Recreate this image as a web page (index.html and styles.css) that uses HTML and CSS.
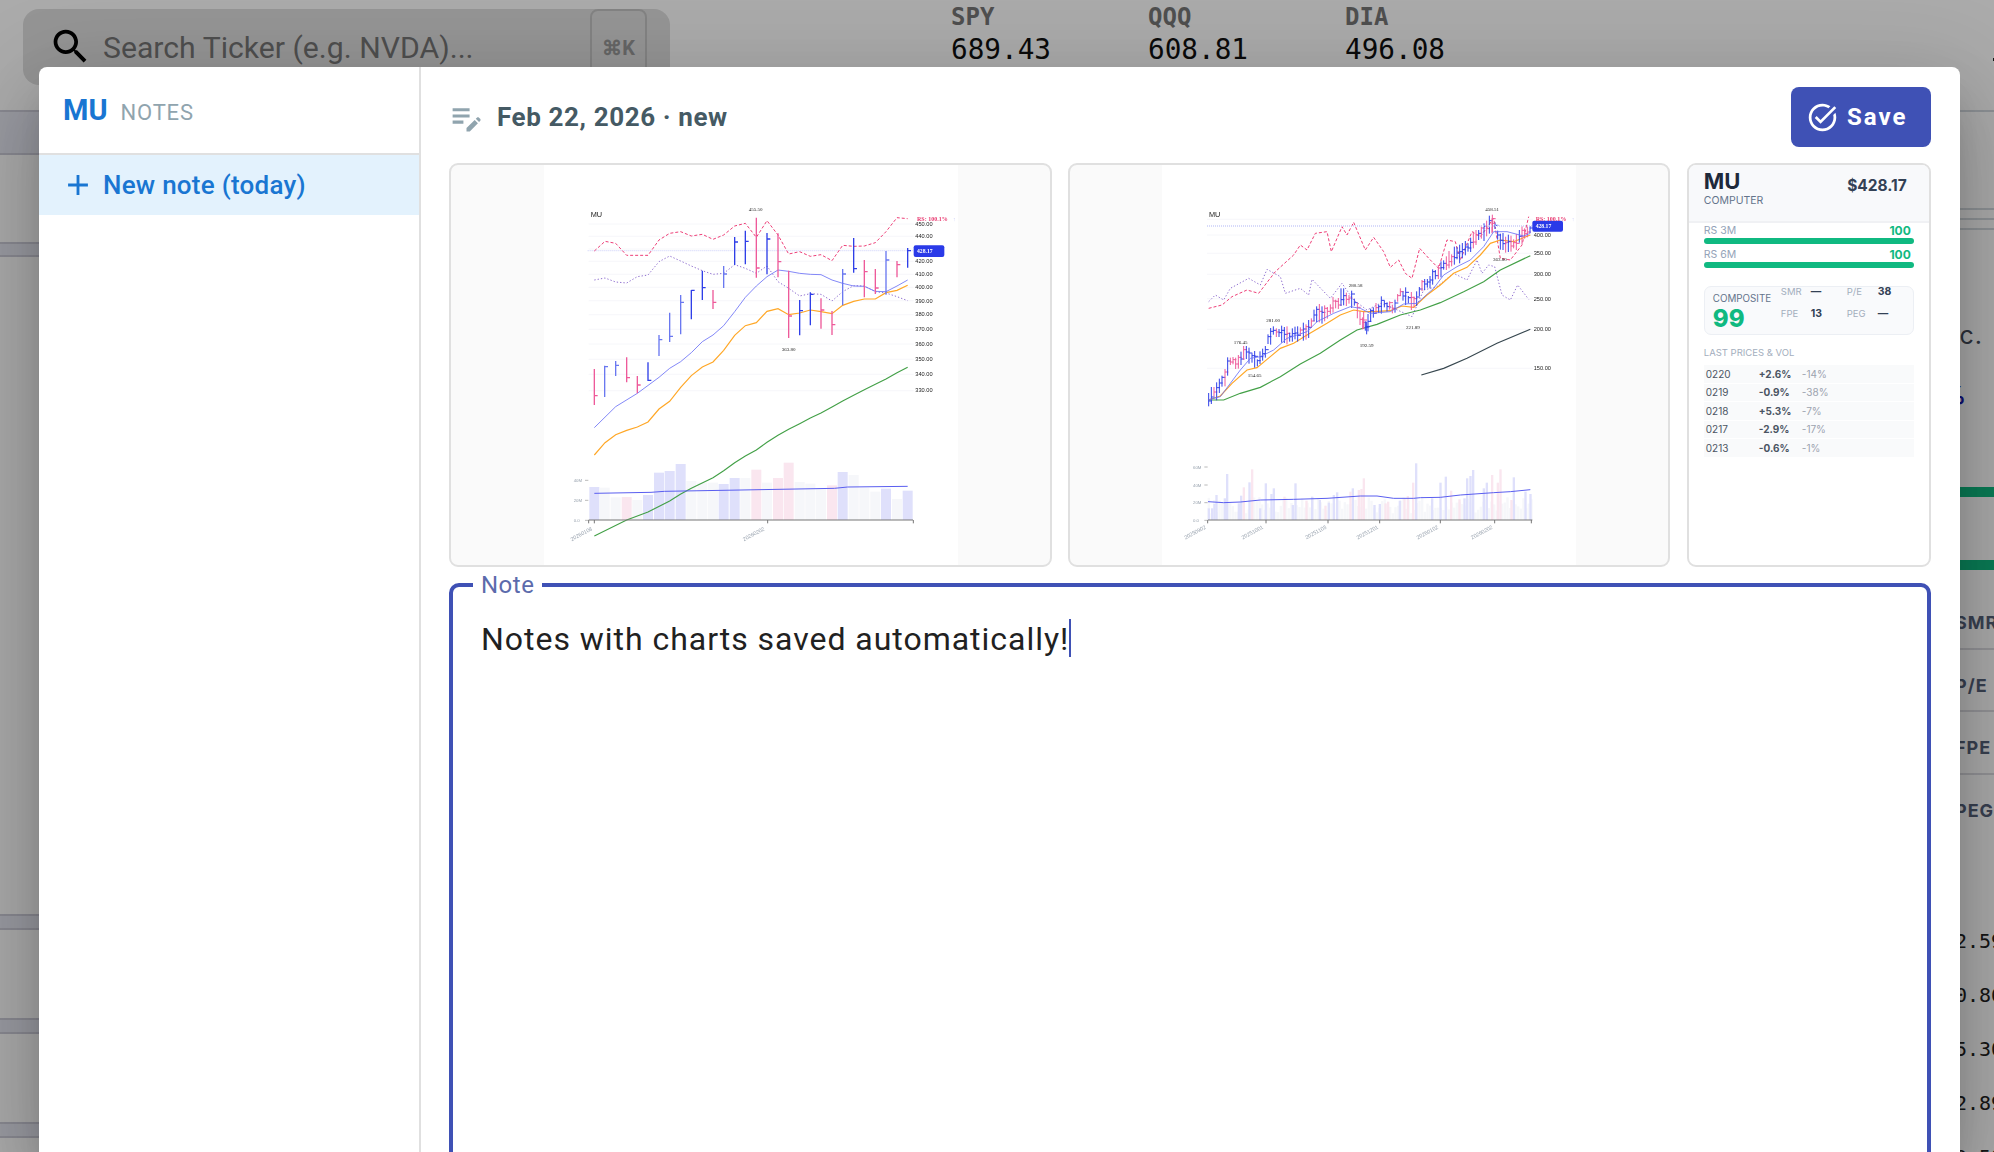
FILE: index.html
```html
<!DOCTYPE html>
<html lang="en">
<head>
    <meta charset="UTF-8">
    <title>MU Notes</title>
    <link rel="stylesheet" href="styles.css">
</head>
<body>

    <!-- Page behind the dialog -->
    <div class="page">
        <div class="topbar">
            <div class="search">
                <svg class="search-icon" viewBox="0 0 24 24"><path d="M15.5 14h-.79l-.28-.27C15.41 12.59 16 11.11 16 9.5 16 5.91 13.09 3 9.5 3S3 5.91 3 9.5 5.91 16 9.5 16c1.61 0 3.09-.59 4.23-1.57l.27.28v.79l5 4.99L20.49 19l-4.99-5zm-6 0C7.01 14 5 11.99 5 9.5S7.01 5 9.5 5 14 7.01 14 9.5 11.99 14 9.5 14z"/></svg>
                <span class="search-text">Search Ticker (e.g. NVDA)...</span>
                <span class="search-key">⌘K</span>
            </div>
            <div class="tickers">
                <div class="ticker"><div class="ticker-name">SPY</div><div class="ticker-value">689.43</div></div>
                <div class="ticker"><div class="ticker-name">QQQ</div><div class="ticker-value">608.81</div></div>
                <div class="ticker"><div class="ticker-name">DIA</div><div class="ticker-value">496.08</div></div>
            </div>
            <div class="topbar-mark"></div>
        </div>
        <div class="content">
            <div class="left-col">
                <div class="band band-head"></div>
                <div class="band band-thin"></div>
                <div class="band band-row band-first"></div>
                <div class="band band-row"></div>
                <div class="band band-row"></div>
            </div>
            <div class="right-col">
                <div class="stock-lines"></div>
                <div class="stock-name"><span>Micron Technology, Inc.</span></div>
                <div class="stock-change">+2.6%</div>
                <div class="meter meter-first"></div>
                <div class="meter"></div>
                <div class="stat stat-first">SMR</div>
                <div class="stat">P/E</div>
                <div class="stat">FPE</div>
                <div class="stat stat-last">PEG</div>
                <div class="price price-first">2.59</div>
                <div class="price">0.86</div>
                <div class="price">5.30</div>
                <div class="price">2.89</div>
                <div class="price">0.59</div>
            </div>
        </div>
    </div>
    <div class="backdrop"></div>

    <!-- Notes dialog -->
    <div class="dialog">
        <aside class="sidebar">
            <div class="sidebar-head">
                <span class="sidebar-symbol">MU</span>
                <span class="sidebar-label">NOTES</span>
            </div>
            <div class="note-item">
                <svg class="plus-icon" viewBox="0 0 24 24"><path d="M19 13h-6v6h-2v-6H5v-2h6V5h2v6h6v2z"/></svg>
                <span>New note (today)</span>
            </div>
        </aside>

        <main class="main">
            <div class="main-head">
                <div class="main-title">
                    <svg class="edit-icon" viewBox="0 0 24 24"><path d="M3 10h11v2H3v-2zm0-2h11V6H3v2zm0 8h7v-2H3v2zm15.01-3.13.71-.71c.39-.39 1.02-.39 1.41 0l.71.71c.39.39.39 1.02 0 1.41l-.71.71-2.12-2.12zm-.71.71-5.3 5.3V21h2.12l5.3-5.3-2.12-2.12z"/></svg>
                    <span>Feb 22, 2026 · new</span>
                </div>
                <button class="save-btn">
                    <svg class="save-icon" viewBox="0 0 24 24"><path d="M22 5.18 10.59 16.6l-4.24-4.24 1.41-1.41 2.83 2.83 10-10L22 5.18zm-2.21 5.04c.13.57.21 1.17.21 1.78 0 4.42-3.58 8-8 8s-8-3.58-8-8 3.58-8 8-8c1.58 0 3.04.46 4.28 1.25l1.44-1.44C16.1 2.67 14.13 2 12 2 6.48 2 2 6.48 2 12s4.48 10 10 10 10-4.48 10-10c0-1.19-.22-2.33-.6-3.39l-1.61 1.61z"/></svg>
                    Save
                </button>
            </div>

            <div class="thumbs">
                <div class="thumb"><svg id="chartDaily" class="chart"></svg></div>
                <div class="thumb"><svg id="chartLong" class="chart"></svg></div>
                <div class="thumb card">
                    <div class="card-head">
                        <div>
                            <div class="card-symbol">MU</div>
                            <div class="card-group">COMPUTER</div>
                        </div>
                        <div class="card-price">$428.17</div>
                    </div>
                    <div class="card-body">
                        <div class="rs-row"><span>RS 3M</span><b>100</b></div>
                        <div class="rs-bar"></div>
                        <div class="rs-row"><span>RS 6M</span><b>100</b></div>
                        <div class="rs-bar"></div>
                        <div class="composite">
                            <div class="composite-score">
                                <div class="composite-label">COMPOSITE</div>
                                <div class="composite-value">99</div>
                            </div>
                            <div class="composite-grid">
                                <span>SMR</span><b>—</b><span>P/E</span><b>38</b>
                                <span>FPE</span><b>13</b><span>PEG</span><b>—</b>
                            </div>
                        </div>
                        <div class="last-title">LAST PRICES &amp; VOL</div>
                        <div class="last-row"><span>0220</span><b>+2.6%</b><i>-14%</i></div>
                        <div class="last-row"><span>0219</span><b>-0.9%</b><i>-38%</i></div>
                        <div class="last-row"><span>0218</span><b>+5.3%</b><i>-7%</i></div>
                        <div class="last-row"><span>0217</span><b>-2.9%</b><i>-17%</i></div>
                        <div class="last-row"><span>0213</span><b>-0.6%</b><i>-1%</i></div>
                    </div>
                </div>
            </div>

            <fieldset class="note-box">
                <legend>Note</legend>
                <div class="note-text">Notes with charts saved automatically!<span class="caret"></span></div>
            </fieldset>
        </main>
    </div>

    <script src="charts.js"></script>
</body>
</html>
```

FILE: styles.css
```css
* {
    box-sizing: border-box;
}
html, body {
    margin: 0;
    height: 100%;
    overflow: hidden;
}
body {
    position: relative;
    width: 1994px;
    height: 1152px;
    background: #fff;
    font-family: Roboto, sans-serif;
}

/* page behind the dialog */
.page {
    height: 100%;
    overflow: hidden;
}
.topbar {
    display: flex;
    height: 110px;
    padding: 9px 0 0 23px;
}
.search {
    display: flex;
    align-items: flex-start;
    width: 647px;
    height: 76px;
    border-radius: 16px;
    background: #dfdfdf;
}
.search-icon {
    width: 45px;
    height: 45px;
    margin: 15px 0 0 25px;
}
.search-text {
    width: 487px;
    margin: 21px 0 0 10px;
    font-size: 30.2px;
    color: #777;
}
.search-key {
    width: 57px;
    height: 70px;
    border: 2px solid #c4c4c4;
    border-radius: 8px;
    padding-top: 25px;
    text-align: center;
    font-size: 20px;
    font-weight: 700;
    color: #999;
}
.tickers {
    display: flex;
    margin-left: 281px;
    margin-top: -6px;
}
.ticker {
    width: 197px;
}
.ticker-name {
    font-family: "DejaVu Sans Mono", monospace;
    font-weight: 700;
    font-size: 24px;
    color: #777;
}
.ticker-value {
    font-family: "DejaVu Sans Mono", monospace;
    font-size: 27.7px;
    margin-top: 2px;
    color: #111;
}
.topbar-mark {
    width: 1px;
    height: 3px;
    margin: 49px 0 0 auto;
    background: #222;
}
.content {
    display: flex;
    justify-content: space-between;
}
.left-col {
    width: 900px;
}
.band {
    background: #e6e7f2;
    border-top: 2px solid #cdcdd9;
    border-bottom: 2px solid #cdcdd9;
}
.band-head {
    height: 45px;
}
.band-thin {
    height: 15px;
    margin-top: 87px;
}
.band-row {
    height: 16px;
    margin-top: 88px;
}
.band-first {
    margin-top: 657px;
}
.right-col {
    width: 120px;
    padding-left: 84px;
    overflow: hidden;
    white-space: nowrap;
    font-family: Inter, sans-serif;
}
.stock-lines {
    height: 120px;
    margin-left: -84px;
    border-top: 2px solid #d3d9df;
    background:
        linear-gradient(#d3d9df, #d3d9df) 0 96px / 100% 2px no-repeat,
        linear-gradient(#d3d9df, #d3d9df) 0 106px / 100% 2px no-repeat,
        linear-gradient(#d3d9df, #d3d9df) 0 116px / 100% 2px no-repeat;
}
.stock-name {
    display: flex;
    justify-content: flex-end;
    width: 109px;
    margin: 90px 0 0 -84px;
    font-size: 25px;
    line-height: 30px;
    letter-spacing: 1px;
    color: #444b58;
}
.stock-name span {
    flex-shrink: 0;
}
.stock-change {
    width: 92px;
    margin: 31px 0 0 -84px;
    font-size: 24px;
    line-height: 30px;
    font-weight: 700;
    color: #1a1ab0;
    text-align: right;
}
.meter {
    height: 10px;
    margin: 63px 0 0 -84px;
    background: #10b981;
}
.meter-first {
    margin-top: 76px;
}
.stat {
    width: 80px;
    height: 62.5px;
    margin-left: -3px;
    padding-top: 26px;
    font-size: 18px;
    line-height: 20px;
    font-weight: 700;
    letter-spacing: 1px;
    color: #55617a;
    border-bottom: 2px solid #dcdce2;
}
.stat-first {
    margin-top: 17px;
}
.stat-last {
    border-bottom: none;
}
.price {
    height: 54px;
    font-family: "DejaVu Sans Mono", monospace;
    font-size: 20px;
    line-height: 24px;
    margin-left: -3px;
    color: #222;
}
.price-first {
    margin-top: 92px;
}
.backdrop {
    position: absolute;
    inset: 0;
    background: rgba(0, 0, 0, 0.33);
}

/* dialog */
.dialog {
    position: absolute;
    left: 39px;
    top: 67px;
    width: 1921px;
    height: 1085px;
    display: flex;
    background: #fff;
    border-radius: 8px 8px 0 0;
    box-shadow: 0 22px 30px -14px rgba(0, 0, 0, 0.2), 0 48px 76px 6px rgba(0, 0, 0, 0.14), 0 18px 92px 16px rgba(0, 0, 0, 0.12);
}
.sidebar {
    width: 382px;
    flex-shrink: 0;
    border-right: 2px solid #e0e0e0;
}
.sidebar-head {
    display: flex;
    align-items: baseline;
    gap: 13px;
    height: 88px;
    padding: 26px 0 0 24px;
    border-bottom: 2px solid #e0e0e0;
}
.sidebar-symbol {
    font-size: 29px;
    font-weight: 700;
    color: #1976d2;
}
.sidebar-label {
    font-size: 22px;
    letter-spacing: 0.8px;
    color: #90a4ae;
}
.note-item {
    display: flex;
    align-items: center;
    height: 60px;
    padding-left: 22px;
    background: #e3f2fd;
    color: #1976d2;
    font-size: 26px;
    font-weight: 500;
    letter-spacing: 0.25px;
}
.plus-icon {
    width: 34px;
    height: 34px;
    margin-right: 8px;
    fill: #1976d2;
}
.main {
    flex: 1;
    min-width: 0;
    padding: 20px 29px 0 28px;
}
.main-head {
    display: flex;
    justify-content: space-between;
    align-items: center;
    height: 60px;
}
.main-title {
    display: flex;
    align-items: center;
    margin-left: -1px;
    font-size: 26px;
    font-weight: 700;
    letter-spacing: 0.6px;
    color: #455a64;
}
.edit-icon {
    width: 37px;
    height: 37px;
    margin-right: 12px;
    fill: #90a4ae;
}
.save-btn {
    display: flex;
    align-items: center;
    width: 140px;
    height: 60px;
    padding: 0 0 0 15px;
    border: none;
    border-radius: 8px;
    background: #3f51b5;
    color: #fff;
    font-family: Roboto, sans-serif;
    font-size: 24px;
    font-weight: 700;
    letter-spacing: 2px;
}
.save-icon {
    width: 33px;
    height: 33px;
    margin-right: 8px;
    fill: #fff;
}
.thumbs {
    display: grid;
    grid-template-columns: 603px 602px 244px;
    column-gap: 16.4px;
    height: 404px;
    margin-top: 16px;
}
.thumb {
    display: flex;
    justify-content: center;
    border: 2px solid #e0e0e0;
    border-radius: 9px;
    background: #fafafa;
    overflow: hidden;
}
.chart {
    width: 414px;
    height: 400px;
    background: #fff;
    filter: blur(0.25px);
}

/* snapshot card, third thumbnail */
.card {
    display: block;
    background: #fff;
    font-family: Inter, sans-serif;
    color: #94a3b8;
}
.card-head {
    display: flex;
    justify-content: space-between;
    height: 58px;
    padding: 3px 22px 0 15px;
    background: #f8f9fb;
    border-bottom: 2px solid #f0f1f4;
}
.card-symbol {
    font-size: 22px;
    font-weight: 700;
    line-height: 26px;
    color: #1e293b;
}
.card-group {
    font-size: 10.5px;
    line-height: 13px;
    color: #64748b;
}
.card-price {
    margin-top: 8px;
    font-size: 15.5px;
    font-weight: 700;
    color: #334155;
}
.card-body {
    padding: 0 15px;
}
.rs-row {
    display: flex;
    justify-content: space-between;
    height: 15px;
    padding-right: 3px;
    font-size: 10.5px;
    line-height: 15px;
}
.rs-row b {
    font-size: 12px;
    color: #10b981;
}
.rs-bar {
    height: 6px;
    margin-bottom: 3px;
    border-radius: 3px;
    background: #10b981;
}
.composite {
    display: flex;
    height: 49px;
    margin-top: 18px;
    padding: 0 0 0 8px;
    border: 1px solid #eceff4;
    border-radius: 7px;
    background: #f9fafc;
}
.composite-score {
    width: 68px;
    padding-top: 5px;
}
.composite-label {
    font-size: 9.8px;
    line-height: 14px;
    color: #64748b;
}
.composite-value {
    font-size: 24px;
    font-weight: 800;
    line-height: 26px;
    color: #10b981;
}
.composite-grid {
    display: grid;
    grid-template-columns: 30px 36px 31px 20px;
    grid-auto-rows: 22px;
    margin-top: -2px;
    font-size: 9.5px;
    line-height: 13px;
    color: #a3aebd;
}
.composite-grid b {
    font-size: 10.5px;
    color: #334155;
}
.last-title {
    height: 19px;
    margin-top: 11px;
    font-size: 9.5px;
    line-height: 13px;
    color: #a3aebd;
}
.last-row {
    display: flex;
    align-items: center;
    height: 18.5px;
    padding-left: 2px;
    background: #f9fafb;
    border-bottom: 1px solid #fff;
    font-size: 10px;
    color: #4b5563;
}
.last-row span {
    width: 53px;
}
.last-row b {
    width: 43px;
    color: #4b5563;
}
.last-row i {
    font-style: normal;
    color: #9ca3af;
}

/* note field */
.note-box {
    height: 620px;
    margin: 4px 0 0;
    padding: 19px 28px;
    border: 4px solid #3f51b5;
    border-radius: 10px;
    min-width: 0;
}
.note-box legend {
    margin-left: -8px;
    padding: 0 8px;
    font-size: 24px;
    line-height: 28px;
    letter-spacing: 0.5px;
    color: #5c6bac;
}
.note-text {
    font-size: 32px;
    line-height: 42px;
    letter-spacing: 0.97px;
    color: #212121;
}
.caret {
    display: inline-block;
    width: 2px;
    height: 38px;
    vertical-align: -7px;
    background: #3f51b5;
}
```

FILE: charts.js
```js
// Chart thumbnails. Coordinates are in a 3x grid over each 414x400 picture.
const BAR_BLUE = '#2f3fe8';
const BAR_PINK = '#ee5a9a';
const VOL = { b: '#dfe0fb', g: '#f6f7fa', p: '#fae6ef' };

function line(points, color, width, dash) {
    const d = dash ? ` stroke-dasharray="${dash}"` : '';
    return `<polyline points="${points}" fill="none" stroke="${color}" stroke-width="${width}"${d}/>`;
}

function label(x, y, text, size, color, extra) {
    return `<text x="${x}" y="${y}" font-size="${size}" fill="${color}" ${extra || ''}>${text}</text>`;
}

function serif(x, y, text) {
    return label(x, y, text, 15, '#222', 'font-family="Liberation Serif"');
}

function priceBar(x, hi, lo, tick, color, width) {
    return `<path d="M${x} ${hi}V${lo}M${x} ${tick}h10" stroke="${color}" stroke-width="${width}" fill="none"/>`;
}

function dateLabel(xEnd, y, text) {
    return label(xEnd, y, text, 16, '#98a2ae', `text-anchor="end" transform="rotate(-28 ${xEnd} ${y})"`);
}

function priceAxis(chart, x) {
    let out = '';
    chart.grid.forEach(y => {
        out += `<path d="M${chart.gridFrom} ${y}H1118" stroke="#f1f3f8" stroke-width="2"/>`;
    });
    chart.labels.forEach(([y, text]) => {
        out += label(x, y, text, 17, '#222');
    });
    return out;
}

function priceTag(x, y, h, dotY) {
    return `<path d="M140 ${dotY}H1118" stroke="#d5d8fa" stroke-width="4" stroke-dasharray="3 3"/>` +
        `<rect x="${x}" y="${y}" width="92" height="${h}" rx="6" fill="#2a3ae8"/>` +
        label(x + 10, y + h / 2 + 6, '428.17', 17, '#fff', 'font-family="Liberation Serif" font-weight="700"') +
        label(x + 10, 122, 'RS: 100.1%', 18, '#e8386f', 'font-family="Liberation Serif" font-weight="700"') +
        label(x + 118, 122, '↑', 16, '#c8ccf5');
}

function volumeAxis(ticks, labels) {
    let out = '<path d="M143 1020H1116" stroke="#777" stroke-width="3"/>';
    ticks.forEach(x => {
        out += `<path d="M${x} 1020v10" stroke="#777" stroke-width="3"/>`;
    });
    labels.forEach(([y, text]) => {
        out += label(98, y + 5, text, 13, '#98a2ae');
        out += `<path d="M132 ${y}h10" stroke="#999" stroke-width="2"/>`;
    });
    return out;
}

function mount(id, x0, y0, body) {
    const svg = document.getElementById(id);
    svg.setAttribute('viewBox', `${x0} ${y0} 1242 1200`);
    svg.setAttribute('font-family', 'Liberation Sans');
    svg.innerHTML = body;
}

// Daily chart: every bar read off the picture
function drawDaily() {
    const bars = [
        [160,567,675,647,'p'],[191,557,651,560,'l'],[224,543,588,556,'l'],[257,532,607,593,'p'],
        [289,588,640,615,'p'],[321,547,603,601,'b'],[354,465,528,479,'l'],[386,398,486,469,'l'],
        [419,345,463,367,'l'],[451,330,418,331,'b'],[484,272,360,323,'b'],[516,330,387,367,'p'],
        [548,258,324,282,'l'],[581,171,255,186,'b'],[613,152,253,184,'b'],[646,113,293,264,'p'],
        [678,159,283,177,'b'],[711,160,292,245,'p'],[743,272,474,408,'p'],[776,360,466,392,'b'],
        [808,337,436,343,'b'],[840,355,446,390,'p'],[873,393,465,434,'p'],[905,267,376,282,'l'],
        [938,174,278,266,'b'],[970,240,352,275,'p'],[1003,267,342,324,'p'],[1035,213,344,240,'l'],
        [1068,243,292,254,'p'],[1100,204,263,212,'b']
    ];
    const vols = [
        [561,'b'],[563,'g'],[592,'g'],[591,'p'],[600,'g'],[585,'b'],[518,'b'],[513,'b'],[492,'b'],[543,'g'],
        [548,'g'],[548,'g'],[552,'b'],[534,'b'],[534,'g'],[509,'p'],[548,'g'],[534,'p'],[488,'p'],[546,'g'],
        [551,'g'],[567,'g'],[556,'p'],[516,'b'],[525,'g'],[563,'g'],[575,'g'],[566,'b'],[597,'g'],[572,'b']
    ];
    let out = priceAxis({
        gridFrom: 143,
        grid: [132,169,207,244,283,322,362,404,448,492,538,583,632],
        labels: [[138,'450.00'],[175,'440.00'],[250,'420.00'],[289,'410.00'],[328,'400.00'],[368,'390.00'],
            [409,'380.00'],[454,'370.00'],[497,'360.00'],[543,'350.00'],[589,'340.00'],[637,'330.00']]
    }, 1123);

    bars.forEach(([x], i) => {
        const [top, kind] = vols[i];
        out += `<rect x="${x - 15}" y="${top + 360}" width="30" height="${660 - top}" fill="${VOL[kind]}"/>`;
    });

    out += priceTag(1118, 196, 35, 212);
    out += label(149, 110, 'MU', 22, '#222');
    out += serif(623, 92, '455.50') + serif(722, 512, '363.80');

    out += line('160,300 192,294 224,306 257,309 289,290 321,285 354,245 386,228 419,243 451,258 484,272 516,283 548,280 581,254 613,265 646,280 678,258 711,305 743,325 776,348 808,341 840,343 873,363 905,335 938,317 970,318 1003,335 1035,339 1068,350 1100,362', '#8f6fd0', 3, '4 6');
    out += line('160,213 192,184 224,190 257,226 321,226 354,180 386,160 419,155 451,168 484,163 516,178 548,165 581,138 613,130 646,172 678,122 711,165 743,222 776,215 808,229 840,224 873,242 905,196 938,199 970,198 1003,188 1035,155 1068,113 1100,116', '#ee3f78', 3, '9 6');
    out += line('160,1068 257,1020 321,996 386,963 418,943 451,925 516,893 548,872 581,848 613,828 646,810 678,787 711,766 743,748 776,731 808,714 840,699 873,681 905,663 938,646 970,629 1003,613 1035,597 1068,578 1100,562', '#43a047', 3.5);
    out += line('160,825 192,788 224,764 257,751 289,741 321,726 354,687 386,664 419,622 451,587 484,561 516,546 548,511 581,466 613,437 646,428 678,394 711,386 743,404 776,399 808,390 840,395 873,401 905,376 938,364 970,357 1003,357 1035,338 1068,331 1100,316', '#ffa726', 3.5);
    out += line('160,743 224,680 289,640 354,592 386,565 419,545 451,518 484,485 516,465 548,437 581,395 613,352 646,318 678,290 711,270 743,274 776,280 808,283 840,284 873,300 905,310 938,318 970,319 1003,334 1035,335 1068,318 1100,300', '#6a70f5', 2.5);

    bars.forEach(([x, hi, lo, tick, kind]) => {
        const color = kind === 'p' ? BAR_PINK : kind === 'l' ? '#6a78f0' : BAR_BLUE;
        out += priceBar(x, hi, lo, tick, color, 4);
    });

    out += line('160,940 330,937 370,934 600,930 880,925 920,921 1100,919', '#5a5ef0', 3);
    out += volumeAxis([143,160,680,1117], [[901,'40M'],[961,'20M'],[1021,'0.0']]);
    out += dateLabel(155, 1050, '20260108') + dateLabel(672, 1050, '20260202');
    mount('chartDaily', 9, -45, out);
}

// Longer chart: bars follow a traced price path, with seeded noise for the wicks
function drawLong() {
    const path = [[143,665],[160,640],[175,622],[195,590],[205,550],[240,540],[245,515],[270,525],[290,545],[315,520],
        [320,485],[340,455],[370,470],[400,465],[440,450],[465,405],[500,395],[545,355],[580,360],[610,445],[620,440],
        [630,405],[665,375],[700,385],[720,340],[760,370],[780,325],[820,295],[850,255],[880,230],[920,200],[960,160],
        [1000,130],[1020,190],[1060,190],[1110,145]];
    let seed = 41;
    const rand = () => {
        seed = (seed * 1103515245 + 12345) % 2147483648;
        return seed / 2147483648;
    };
    const priceAt = x => {
        for (let i = 1; i < path.length; i++) {
            if (x <= path[i][0]) {
                const [ax, ay] = path[i - 1];
                const [bx, by] = path[i];
                return ay + (by - ay) * (x - ax) / (bx - ax);
            }
        }
        return path[path.length - 1][1];
    };

    let out = priceAxis({
        gridFrom: 140,
        grid: [118,165,220,283,356,448,565],
        labels: [[171,'400.00'],[225,'350.00'],[289,'300.00'],[362,'250.00'],[453,'200.00'],[570,'150.00']]
    }, 1120);

    // grey volume first, coloured days on top
    for (let x = 142; x < 1112; x += 8) {
        const top = 950 + rand() * 50;
        out += `<rect x="${x}" y="${top}" width="7" height="${1020 - top}" fill="${VOL.g}"/>`;
    }
    const blueVol = [[145,985],[155,985],[162,972],[168,945],[193,955],[200,882],[235,970],[242,947],[267,907],[299,985],[316,910],[333,942],[340,925],[397,975],[405,910],[455,950],[478,960],[505,968],[520,945],[530,937],[577,925],[642,975],[658,972],[718,962],[767,850],[815,955],[840,908],[856,890],[912,955],[920,895],[930,888],[938,870],[970,925],[979,908],[1060,892],[1095,935],[1110,942]];
    const pinkVol = [[250,922],[275,868],[372,950],[438,962],[495,977],[570,935],[595,930],[603,927],[610,895],[675,970],[683,965],[732,955],[742,948],[758,908],[872,932],[897,958],[995,885],[1012,908],[1020,868],[1053,960]];
    blueVol.forEach(([x, top]) => { out += `<rect x="${x - 3}" y="${top}" width="7" height="${1020 - top}" fill="${VOL.b}"/>`; });
    pinkVol.forEach(([x, top]) => { out += `<rect x="${x - 3}" y="${top}" width="7" height="${1020 - top}" fill="${VOL.p}"/>`; });

    out += `<path d="M140 138H1118" stroke="#d5d8fa" stroke-width="4" stroke-dasharray="3 3"/>`;
    out += line('145,365 165,345 190,360 210,325 265,295 300,315 320,268 360,290 375,340 420,325 445,345 455,298 510,355 545,310 580,360 620,390 660,370 700,385 755,410 790,330 830,320 880,280 920,300 950,240 965,280 985,255 1003,260 1025,345 1050,360 1072,315 1105,358', '#8f6fd0', 3, '4 6');
    out += line('145,385 185,375 215,350 260,330 295,340 345,275 400,225 420,195 440,210 465,160 500,155 513,215 545,140 560,165 580,127 615,210 640,172 670,215 690,262 715,240 735,280 755,295 778,205 810,240 835,265 860,180 885,185 900,240 935,155 960,170 1000,115 1020,235 1050,240 1085,195 1105,110', '#ee3f78', 3, '9 6');
    out += line('143,660 190,660 240,640 300,622 360,590 420,552 480,520 540,480 590,450 650,433 720,405 780,390 840,368 910,335 970,305 1020,270 1110,227', '#43a047', 3.5);
    out += line('783,585 850,565 920,535 1010,490 1110,448', '#37474f', 3.5);
    out += line('143,660 180,648 215,610 260,570 290,563 330,530 360,505 400,490 440,465 500,430 540,405 580,390 610,395 640,395 690,392 725,378 760,382 800,345 840,315 880,280 920,262 960,225 990,190 1020,180 1060,185 1110,165', '#ffa726', 3.5);

    for (let x = 145; x < 1112; x += 8.1) {
        const mid = priceAt(x) + (rand() - 0.5) * 12;
        const size = 10 + rand() * 18;
        const pink = rand() < 0.34;
        out += priceBar(Math.round(x), Math.round(mid - size), Math.round(mid + size), Math.round(mid - size * (rand() - 0.3)), pink ? BAR_PINK : BAR_BLUE, 3);
    }
    out += priceBar(610, 395, 447, 420, BAR_PINK, 3) + priceBar(619, 425, 463, 440, BAR_BLUE, 3);
    out += priceBar(995, 115, 160, 130, BAR_PINK, 3);
    out += line('143,660 180,650 210,610 240,570 270,535 300,530 340,510 380,475 440,455 470,425 520,400 570,380 600,385 630,400 690,395 730,372 770,370 820,325 850,285 890,260 930,240 970,200 1000,155 1040,155 1090,168 1110,160', '#6a70f5', 2.5);

    out += priceTag(1116, 122, 33, 138);
    out += label(146, 110, 'MU', 22, '#222');
    [[975,92,'458.51'],[565,320,'280.58'],[318,425,'281.00'],[220,491,'176.45'],[262,591,'154.65'],
        [598,502,'192.59'],[737,446,'221.89'],[998,242,'363.80']].forEach(([x, y, text]) => {
        out += serif(x, y, text);
    });

    out += line('143,965 190,968 240,966 300,960 400,958 500,955 600,948 650,948 700,955 760,955 780,953 840,952 900,945 1000,938 1050,935 1110,929', '#5a5ef0', 3);
    out += volumeAxis([142,317,503,658,840,1003,1113], [[861,'60M'],[915,'40M'],[968,'20M'],[1021,'0.0']]);
    [[138,'20250902'],[310,'20251001'],[500,'20251103'],[655,'20251201'],[835,'20260102'],[998,'20260202']].forEach(([x, text]) => {
        out += dateLabel(x, 1045, text);
    });
    mount('chartLong', 5, -45, out);
}

drawDaily();
drawLong();
```
